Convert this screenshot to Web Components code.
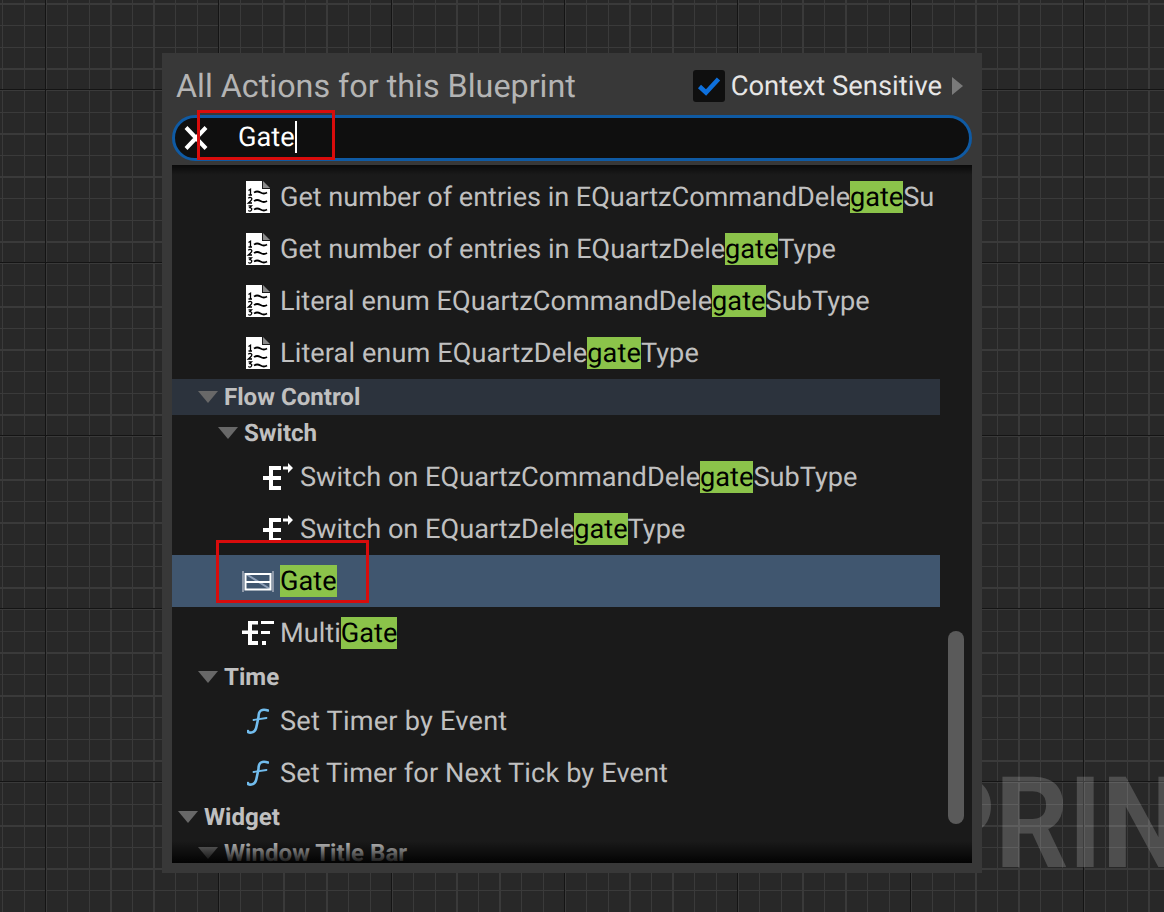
<!DOCTYPE html>
<html>
<head>
<meta charset="utf-8">
<title>All Actions for this Blueprint</title>
<style>
    html, body { margin: 0; height: 100%; overflow: hidden; background: #282828; }
</style>
</head>
<body>
<graph-canvas>
    <action-menu>
        <action-row style="letter-spacing:-0.045px" depth="2" icon="enum" label="Get number of entries in EQuartzCommandDelegateSubType"></action-row>
        <action-row style="letter-spacing:-0.03px" depth="2" icon="enum" label="Get number of entries in EQuartzDelegateType"></action-row>
        <action-row style="letter-spacing:0.03px" depth="2" icon="enum" label="Literal enum EQuartzCommandDelegateSubType"></action-row>
        <action-row style="letter-spacing:0.08px" depth="2" icon="enum" label="Literal enum EQuartzDelegateType"></action-row>
        <tree-header depth="1" label="Flow Control" active></tree-header>
        <tree-header depth="2" label="Switch"></tree-header>
        <action-row depth="3" icon="switch" label="Switch on EQuartzCommandDelegateSubType"></action-row>
        <action-row depth="3" icon="switch" label="Switch on EQuartzDelegateType"></action-row>
        <action-row depth="2" icon="gate" label="Gate" selected></action-row>
        <action-row depth="2" icon="multigate" label="MultiGate"></action-row>
        <tree-header depth="1" label="Time"></tree-header>
        <action-row style="letter-spacing:0.22px" depth="2" icon="func" label="Set Timer by Event"></action-row>
        <action-row style="letter-spacing:0.125px" depth="2" icon="func" label="Set Timer for Next Tick by Event"></action-row>
        <tree-header depth="0" label="Widget"></tree-header>
        <tree-header depth="1" label="Window Title Bar"></tree-header>
    </action-menu>
    <red-box style="left:197px;top:110px;width:138px;height:50px"></red-box>
    <red-box style="left:216px;top:540px;width:153px;height:63px"></red-box>
</graph-canvas>

<script>
const ICONS = {
    enum: `<svg width="24" height="32" viewBox="0 0 24 32">
        <path d="M0 0H16V8H24V32H0Z" fill="#fff"/>
        <path d="M17 0L24 7H17Z" fill="#8a8a8a"/>
        <g fill="none" stroke="#000" stroke-width="1.3">
            <path d="M2.5 9.5L4.5 8.2V14M2.5 14H6"/>
            <path d="M2.3 17.3Q4 15.6 5.5 17T2.4 22H6"/>
            <path d="M2.5 24.8H5.5L3.8 26.6Q6.5 27 5.5 29T2.3 29.5"/>
            <path d="M8 11.5Q11 9.5 14.5 11.5T21 11.5" stroke-width="1.8"/>
            <path d="M8 20Q11 18 14.5 20T21 20" stroke-width="1.8"/>
            <path d="M8 28.5Q11 26.5 14.5 28.5T21 28.5" stroke-width="1.8"/>
        </g>
    </svg>`,
    switch: `<svg width="30" height="27" viewBox="0 0 30 27" fill="#fff" style="margin-bottom:2px">
        <path d="M6 3H18V7H10V13H18V17H10V23H18V27H6V17H0V13H6Z"/>
        <path d="M20 3.5H25V0L30 5L25 10V6.5H20Z"/>
    </svg>`,
    gate: `<svg width="32" height="21" viewBox="0 0 32 21">
        <path d="M1 0V21M31 0V21" stroke="#aeb6c2" stroke-width="1.4"/>
        <path d="M4 3L28 18" stroke="#8fa0b8" stroke-width="2"/>
        <path d="M3.5 3H28.5V18.5H3.5ZM3.5 11H28.5" fill="none" stroke="#fff" stroke-width="2"/>
    </svg>`,
    multigate: `<svg width="32" height="24" viewBox="0 0 32 24" fill="#fff">
        <path d="M6 0H16V3.5H10V9.5H16V13H10V20H16V24H6V13H0V9.5H6Z"/>
        <path d="M19 0H32V3H19ZM19 10H28V13H19ZM20 20H24V24H20Z"/>
    </svg>`,
    func: `<svg width="22" height="26" viewBox="0 0 22 26" fill="none" stroke="#72bdee" stroke-linecap="round">
        <path d="M21 2.5Q16.5 1 14 2.5T11.5 9L9.5 18.5Q8.5 24 4.5 24.5T1 23" stroke-width="2.6"/>
        <path d="M6.5 12L19.5 10" stroke-width="1.8"/>
    </svg>`,
};

const graphCanvasTemplate = document.createElement('template');
graphCanvasTemplate.innerHTML = `
    <style>
        :host {
            display: block;
            position: relative;
            box-sizing: border-box;
            width: 100%;
            height: 100vh;
            overflow: hidden;
            padding: 53px 182px 0 162px;
            background-color: #282828;
            background-image:
                linear-gradient(to right, #141414 1px, transparent 1px),
                linear-gradient(to bottom, #141414 1px, transparent 1px),
                repeating-linear-gradient(to right, transparent 0 2px, #3a3a3a 2px 3.4px, transparent 3.4px 21.625px),
                repeating-linear-gradient(to bottom, transparent 0 3.4px, #3a3a3a 3.4px 4.8px, transparent 4.8px 21.625px);
            background-size: 173px 173px, 173px 173px, auto, auto;
            background-position: 45px 0, 0 89px, 0 0, 0 0;
            font-family: Roboto, "Liberation Sans", sans-serif;
            text-rendering: geometricPrecision;
        }
        #watermark {
            position: absolute;
            left: 649px;
            top: 750px;
            font-size: 127px;
            line-height: 150px;
            font-weight: 700;
            white-space: nowrap;
            color: rgba(255, 255, 255, 0.18);
            transform: scaleX(0.9);
            transform-origin: left top;
        }
    </style>
    <div id="watermark">BLUEPRINT</div>
    <slot></slot>
`;

class GraphCanvas extends HTMLElement {
    constructor() {
        super();
        const shadowRoot = this.attachShadow({mode: 'open'});
        shadowRoot.appendChild(graphCanvasTemplate.content.cloneNode(true));
    }
}

const actionMenuTemplate = document.createElement('template');
actionMenuTemplate.innerHTML = `
    <style>
        :host {
            display: flex;
            flex-direction: column;
            position: relative;
            z-index: 1;
            box-sizing: border-box;
            width: 820px;
            height: 820px;
            padding: 0 10px 10px;
            background: #383838;
        }
        #title-bar {
            display: flex;
            align-items: center;
            box-sizing: border-box;
            height: 62px;
            padding: 4px 0 0 4px;
        }
        #title {
            flex: 1;
            font-size: 32.3px;
            color: #b4b4b4;
        }
        #context {
            display: flex;
            align-items: center;
            color: #e6e6e6;
            font-size: 27.4px;
            padding-right: 9px;
        }
        #checkbox {
            display: flex;
            align-items: center;
            justify-content: center;
            width: 32px;
            height: 32px;
            margin-right: 6px;
            background: #0f0f0f;
            border-radius: 3px;
        }
        #more {
            width: 0;
            height: 0;
            margin-left: 10px;
            border-left: 11px solid #7a7a7a;
            border-top: 9px solid transparent;
            border-bottom: 9px solid transparent;
        }
        #list {
            flex: 1;
            display: flex;
            position: relative;
            min-height: 0;
            margin-top: 4px;
            background: #1a1a1a;
            overflow: hidden;
        }
        #list::before, #list::after {
            content: '';
            position: absolute;
            left: 0;
            right: 0;
            height: 22px;
            z-index: 2;
            pointer-events: none;
        }
        #list::before {
            top: 0;
            height: 10px;
            background: linear-gradient(rgba(0, 0, 0, 0.6), rgba(0, 0, 0, 0));
        }
        #list::after {
            bottom: 0;
            background: linear-gradient(rgba(0, 0, 0, 0), rgba(0, 0, 0, 0.9));
        }
        #tree {
            width: 768px;
            padding-top: 6px;
            flex: none;
        }
        #track {
            flex: 1;
            padding: 466px 8px 0;
        }
        #thumb {
            height: 193px;
            background: #5a5a5a;
            border-radius: 8px;
        }
    </style>
    <div id="title-bar">
        <div id="title">All Actions for this Blueprint</div>
        <div id="context">
            <div id="checkbox">
                <svg width="24" height="20" viewBox="0 0 24 20"><path d="M2.5 10.5L9 16.5L21.5 3" fill="none" stroke="#0e70dc" stroke-width="4.5"/></svg>
            </div>
            Context Sensitive
            <div id="more"></div>
        </div>
    </div>
    <search-box value="Gate"></search-box>
    <div id="list">
        <div id="tree"><slot></slot></div>
        <div id="track"><div id="thumb"></div></div>
    </div>
`;

class ActionMenu extends HTMLElement {
    constructor() {
        super();
        const shadowRoot = this.attachShadow({mode: 'open'});
        shadowRoot.appendChild(actionMenuTemplate.content.cloneNode(true));
    }
}

const searchBoxTemplate = document.createElement('template');
searchBoxTemplate.innerHTML = `
    <style>
        :host {
            display: flex;
            align-items: center;
            box-sizing: border-box;
            height: 46px;
            padding: 0 0 2px 9px;
            background: #0f0f0f;
            border: 3px solid #0f5aa3;
            border-radius: 23px;
            color: #fff;
            font-size: 27.2px;
        }
        svg { flex: none; margin-top: 2px; }
        #value { margin-left: 30px; }
        #caret {
            width: 2.5px;
            height: 32px;
            background: #fff;
        }
    </style>
    <svg width="24" height="24" viewBox="0 0 24 24"><path d="M2 1.5L22 22.5M22 1.5L2 22.5" stroke="#fff" stroke-width="4"/></svg>
    <span id="value"></span><span id="caret"></span>
`;

class SearchBox extends HTMLElement {
    constructor() {
        super();
        const shadowRoot = this.attachShadow({mode: 'open'});
        shadowRoot.appendChild(searchBoxTemplate.content.cloneNode(true));
        shadowRoot.querySelector('#value').textContent = this.getAttribute('value');
    }
}

const treeHeaderTemplate = document.createElement('template');
treeHeaderTemplate.innerHTML = `
    <style>
        :host {
            display: flex;
            align-items: center;
            box-sizing: border-box;
            height: 36px;
            padding-left: calc(6px + 20px * var(--depth, 0));
            color: #c0c0c0;
            font-size: 24.1px;
            font-weight: 700;
        }
        :host([active]) { background: #2c333d; }
        #arrow {
            flex: none;
            width: 0;
            height: 0;
            margin-right: 6px;
            border-top: 12px solid #686868;
            border-left: 10px solid transparent;
            border-right: 10px solid transparent;
        }
    </style>
    <div id="arrow"></div>
    <span id="label"></span>
`;

class TreeHeader extends HTMLElement {
    constructor() {
        super();
        const shadowRoot = this.attachShadow({mode: 'open'});
        shadowRoot.appendChild(treeHeaderTemplate.content.cloneNode(true));
        shadowRoot.querySelector('#label').textContent = this.getAttribute('label');
        this.style.setProperty('--depth', this.getAttribute('depth'));
    }
}

const actionRowTemplate = document.createElement('template');
actionRowTemplate.innerHTML = `
    <style>
        :host {
            display: flex;
            align-items: center;
            box-sizing: border-box;
            height: 52px;
            padding: 0 5px 0 calc(28px + 20px * var(--depth, 0));
            color: #c0c0c0;
            font-size: 27.15px;
            white-space: nowrap;
            overflow: hidden;
        }
        :host([selected]) { background: #40566f; }
        #icon {
            flex: none;
            display: flex;
            align-items: center;
            justify-content: center;
            width: 36px;
            margin-right: 4px;
        }
        #label {
            overflow: hidden;
            line-height: 32px;
        }
        .match {
            display: inline-block;
            height: 32px;
            background: #8bc34a;
            color: #000;
        }
    </style>
    <div id="icon"></div>
    <div id="label"></div>
`;

class ActionRow extends HTMLElement {
    constructor() {
        super();
        const shadowRoot = this.attachShadow({mode: 'open'});
        shadowRoot.appendChild(actionRowTemplate.content.cloneNode(true));
        this.style.setProperty('--depth', this.getAttribute('depth'));
        shadowRoot.querySelector('#icon').innerHTML = ICONS[this.getAttribute('icon')];
        this.renderLabel(shadowRoot.querySelector('#label'), this.getAttribute('label'));
    }

    // wraps the search term in a green span
    renderLabel(labelEl, text) {
        const at = text.toLowerCase().indexOf('gate');
        if (at < 0) {
            labelEl.textContent = text;
            return;
        }
        labelEl.append(text.slice(0, at));
        const match = document.createElement('span');
        match.classList.add('match');
        match.textContent = text.slice(at, at + 4);
        labelEl.append(match, text.slice(at + 4));
    }
}

const redBoxTemplate = document.createElement('template');
redBoxTemplate.innerHTML = `
    <style>
        :host {
            display: block;
            position: absolute;
            z-index: 3;
            box-sizing: border-box;
            border: 3px solid #d80c0c;
        }
    </style>
`;

class RedBox extends HTMLElement {
    constructor() {
        super();
        const shadowRoot = this.attachShadow({mode: 'open'});
        shadowRoot.appendChild(redBoxTemplate.content.cloneNode(true));
    }
}

customElements.define('graph-canvas', GraphCanvas);
customElements.define('action-menu', ActionMenu);
customElements.define('search-box', SearchBox);
customElements.define('tree-header', TreeHeader);
customElements.define('action-row', ActionRow);
customElements.define('red-box', RedBox);
</script>
</body>
</html>
